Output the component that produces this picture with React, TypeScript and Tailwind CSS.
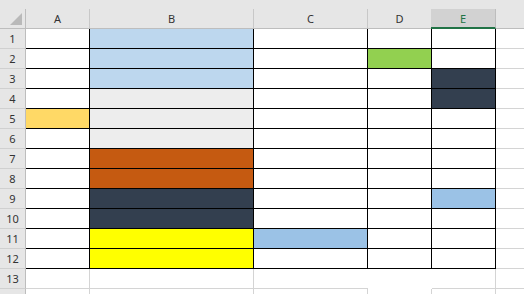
import React from "react";

const COLS = ["A", "B", "C", "D", "E"];

const FILLS: Record<string, string> = {
  "1-B": "bg-[#bdd7ee]",
  "2-B": "bg-[#bdd7ee]",
  "3-B": "bg-[#bdd7ee]",
  "4-B": "bg-[#ededed]",
  "5-B": "bg-[#ededed]",
  "6-B": "bg-[#ededed]",
  "5-A": "bg-[#ffd966]",
  "7-B": "bg-[#c55a11]",
  "8-B": "bg-[#c55a11]",
  "9-B": "bg-[#333f4f]",
  "10-B": "bg-[#333f4f]",
  "3-E": "bg-[#333f4f]",
  "4-E": "bg-[#333f4f]",
  "11-B": "bg-[#ffff00]",
  "12-B": "bg-[#ffff00]",
  "11-C": "bg-[#9bc2e6]",
  "9-E": "bg-[#9bc2e6]",
  "2-D": "bg-[#92d050]",
};

function ColHeader({ label, selected }: { label: string; selected?: boolean }) {
  if (selected) {
    return (
      <div className="-ml-px h-[29px] pt-[9px] bg-[#e6e6e6]">
        <div className="h-[20px] bg-[#d2d2d2] border-r border-[#bdbdbd] border-b-2 border-b-[#217346] flex items-center justify-center text-[#217346]">
          {label}
        </div>
      </div>
    );
  }
  return (
    <div className="h-[29px] pt-[9px] bg-[#e6e6e6] border-b border-[#bdbdbd]">
      <div className="h-[19px] border-r border-[#c8c8c8] flex items-center justify-center text-[#333333]">
        {label}
      </div>
    </div>
  );
}

function RowHeader({ n }: { n: number }) {
  return (
    <div className="bg-[#e6e6e6] border-r border-b border-r-[#bdbdbd] border-b-[#d0d0d0] flex items-center justify-center text-[#333333]">
      {n}
    </div>
  );
}

function DataCell({ row, col }: { row: number; col: string }) {
  const fill = FILLS[`${row}-${col}`] ?? "bg-white";
  return <div className={`${fill} border-r border-b border-black`} />;
}

export default function App() {
  const rows = Array.from({ length: 12 }, (_, i) => i + 1);
  return (
    <div
      className="w-[524px] h-[294px] overflow-hidden bg-white grid grid-cols-[26px_64px_164px_114px_64px_64px_1fr] grid-rows-[29px_repeat(13,20px)_1fr] text-[11px] leading-none"
      style={{ fontFamily: '"Noto Sans", "Open Sans", sans-serif' }}
    >
      {/* header row */}
      <div className="h-[29px] bg-[#e6e6e6] border-b border-[#bdbdbd] pt-[9px]">
        <div className="h-[19px] border-r border-[#bdbdbd] relative">
          <svg className="absolute left-0 top-[-9px]" width="25" height="28" viewBox="0 0 25 28">
            <polygon points="22,13 22,25 10,25" fill="#b9b9b9" />
          </svg>
        </div>
      </div>
      <ColHeader label="A" />
      <ColHeader label="B" />
      <ColHeader label="C" />
      <ColHeader label="D" />
      <ColHeader label="E" selected />
      <div className="h-[29px] bg-[#e6e6e6] border-b border-[#bdbdbd]" />

      {rows.map((r) => (
        <React.Fragment key={r}>
          <RowHeader n={r} />
          {COLS.map((c) => (
            <DataCell key={c} row={r} col={c} />
          ))}
          <div className="border-b border-[#d4d4d4]" />
        </React.Fragment>
      ))}

      {/* row 13 */}
      <RowHeader n={13} />
      <div className="border-r border-b border-[#d4d4d4]" />
      <div className="border-r border-b border-[#d4d4d4]" />
      <div className="border-b border-[#d4d4d4]" />
      <div />
      <div className="border-r border-b border-[#d4d4d4]" />
      <div className="border-b border-[#d4d4d4]" />

      {/* row 14 partial */}
      <div className="bg-[#e6e6e6] border-r border-[#bdbdbd]" />
      <div className="border-r border-[#d4d4d4]" />
      <div className="border-r border-[#d4d4d4]" />
      <div className="border-r border-[#d4d4d4]" />
      <div className="border-r border-[#d4d4d4]" />
      <div className="border-r border-[#d4d4d4]" />
      <div />
    </div>
  );
}
